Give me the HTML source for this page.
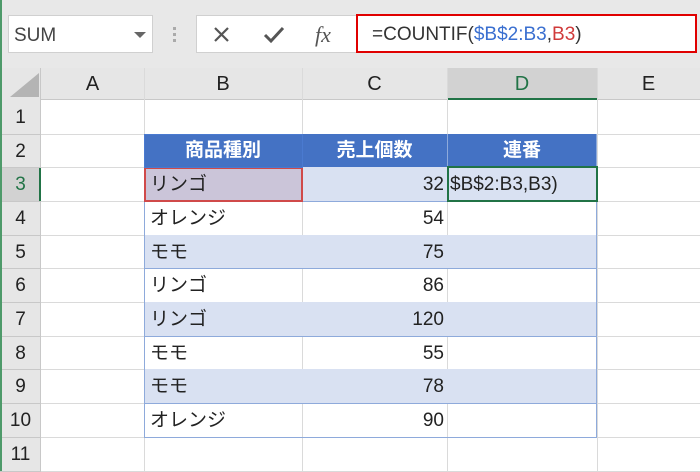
<!DOCTYPE html><html><head><meta charset="utf-8"><style>
body{margin:0;width:700px;height:471px;overflow:hidden;background:#fff;font-family:"Liberation Sans","Noto Sans CJK JP",sans-serif;position:relative}
div{position:absolute;box-sizing:border-box}
.t{font-size:19px;color:#222;line-height:1}
</style></head><body>
<div style="left:0;top:0;width:700px;height:68px;background:#e8e8e8"></div>
<div style="left:0;top:0;width:2px;height:471px;background:#4e9a6a;z-index:5"></div>
<div style="left:8px;top:15px;width:145px;height:38px;background:#fff;border:1px solid #d0d0d0"></div>
<div class="t" style="left:14px;top:26px;font-size:19px;color:#444">SUM</div>
<div style="left:134px;top:32px;width:0;height:0;border-left:6px solid transparent;border-right:6px solid transparent;border-top:6px solid #666"></div>
<div style="left:173px;top:27px;width:3px;height:3px;background:#aaa;box-shadow:0 6px 0 #aaa,0 12px 0 #aaa"></div>
<div style="left:196px;top:15px;width:170px;height:38px;background:#fff;border:1px solid #d0d0d0"></div>
<svg style="position:absolute;left:210px;top:24px" width="24" height="22"><path d="M5 4 L18 17 M18 4 L5 17" stroke="#555" stroke-width="2.2"/></svg>
<svg style="position:absolute;left:262px;top:24px" width="24" height="22"><path d="M3 11 L9 17 L21 4" stroke="#555" stroke-width="3" fill="none"/></svg>
<div style="left:315px;top:22px;font-family:'Liberation Serif',serif;font-style:italic;font-size:22px;color:#555">fx</div>
<div style="left:356px;top:14px;width:341px;height:39px;background:#fff;border:2px solid #e00000"></div>
<div style="left:372px;top:24px;font-size:19px;color:#333;white-space:nowrap">=COUNTIF(<span style="color:#3a6fd0">$B$2:B3</span>,<span style="color:#d03a3a">B3</span>)</div>
<div style="left:0;top:68px;width:700px;height:32px;background:#e6e6e6;border-bottom:1px solid #c8c8c8"></div>
<div style="left:0;top:68px;width:41px;height:403px;background:#e6e6e6;border-right:1px solid #c8c8c8"></div>
<div style="left:10px;top:73px;width:0;height:0;border-left:29px solid transparent;border-bottom:24px solid #b4b4b4"></div>
<div style="left:447px;top:68px;width:150px;height:32px;background:#d2d2d2;border-bottom:2px solid #217346"></div>
<div style="left:0;top:167px;width:41px;height:34px;background:#d2d2d2;border-right:2px solid #217346"></div>
<div id="g"></div>
<script>
var cols=[41,144,302,447,597,700],L="ABCDE",rows=[100,134,167,201,235,268,302,336,369,403,437,471],h='';
for(var i=0;i<5;i++){var c=i==3?'#217346':'#222';h+='<div class="t" style="left:'+cols[i]+'px;top:74px;width:'+(cols[i+1]-cols[i])+'px;text-align:center;font-size:20px;color:'+c+'">'+L[i]+'</div>';if(i>0)h+='<div style="left:'+cols[i]+'px;top:68px;width:1px;height:403px;background:#dadada"></div>';}
for(var r=0;r<11;r++){var c=r==2?'#217346':'#222';h+='<div class="t" style="left:0;top:'+(rows[r]+8)+'px;width:41px;text-align:center;font-size:19px;color:'+c+'">'+(r+1)+'</div>';h+='<div style="left:41px;top:'+rows[r+1]+'px;width:659px;height:1px;background:#dadada"></div>';h+='<div style="left:0;top:'+rows[r+1]+'px;width:41px;height:1px;background:#c8c8c8"></div>';}
var d=[["リンゴ",32],["オレンジ",54],["モモ",75],["リンゴ",86],["リンゴ",120],["モモ",55],["モモ",78],["オレンジ",90]];
h+='<div style="left:144px;top:134px;width:453px;height:33px;background:#4472c4"></div>';
[["商品種別",144,302],["売上個数",302,447],["連番",447,597]].forEach(function(x){h+='<div class="t" style="left:'+x[1]+'px;top:141px;width:'+(x[2]-x[1])+'px;text-align:center;color:#fff;font-weight:bold">'+x[0]+'</div>';});
h+='<div style="left:302px;top:134px;width:1px;height:33px;background:#8eaadb"></div><div style="left:447px;top:134px;width:1px;height:33px;background:#8eaadb"></div>';
for(var k=0;k<8;k++){var y=rows[k+2],hh=rows[k+3]-y;if(k%2==0)h+='<div style="left:144px;top:'+y+'px;width:453px;height:'+hh+'px;background:#d9e1f2"></div>';
h+='<div style="left:144px;top:'+(y+hh)+'px;width:453px;height:1px;background:#8eaadb"></div>';
h+='<div class="t" style="left:150px;top:'+(y+8)+'px">'+d[k][0]+'</div><div class="t" style="left:302px;top:'+(y+8)+'px;width:142px;text-align:right">'+d[k][1]+'</div>';}
h+='<div style="left:144px;top:134px;width:1px;height:303px;background:#8eaadb"></div><div style="left:596px;top:134px;width:1px;height:303px;background:#8eaadb"></div>';
h+='<div style="left:144px;top:167px;width:159px;height:35px;background:#cbc5d9;border:2px solid #d04a4a"></div><div class="t" style="left:150px;top:175px">リンゴ</div>';
h+='<div style="left:144px;top:134px;width:159px;height:34px;border:1px solid #4a7ad0"></div>';
h+='<div style="left:447px;top:166px;width:151px;height:36px;border:2px solid #217346;background:#d9e1f2"></div><div class="t" style="left:450px;top:175px">$B$2:B3,B3)</div>';
document.getElementById('g').outerHTML=h;
</script>
</body></html>
